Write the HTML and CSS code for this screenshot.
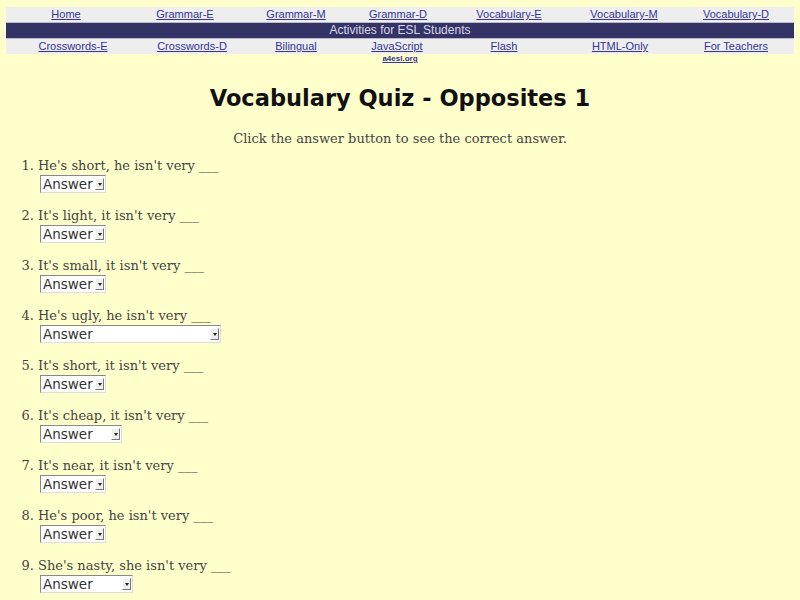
FILE: index.html
```html
<!DOCTYPE html>
<html>
<head>
<meta charset="utf-8">
<title>Vocabulary Quiz - Opposites 1</title>
<link rel="stylesheet" href="styles.css">
</head>
<body>
<table class="nav">
  <colgroup>
    <col class="c120"><col class="c118"><col class="c104"><col class="c100"><col class="c122"><col class="c108"><col class="c116">
  </colgroup>
  <tr class="links">
    <td><a href="#">Home</a></td>
    <td><a href="#">Grammar-E</a></td>
    <td><a href="#">Grammar-M</a></td>
    <td><a href="#">Grammar-D</a></td>
    <td><a href="#">Vocabulary-E</a></td>
    <td><a href="#">Vocabulary-M</a></td>
    <td><a href="#">Vocabulary-D</a></td>
  </tr>
  <tr class="bar">
    <td colspan="7">Activities for ESL Students</td>
  </tr>
</table>
<table class="nav">
  <colgroup>
    <col class="c134"><col class="c104"><col class="c104"><col class="c98"><col class="c116"><col class="c116"><col class="c116">
  </colgroup>
  <tr class="links">
    <td><a href="#">Crosswords-E</a></td>
    <td><a href="#">Crosswords-D</a></td>
    <td><a href="#">Bilingual</a></td>
    <td><a href="#">JavaScript</a></td>
    <td><a href="#">Flash</a></td>
    <td><a href="#">HTML-Only</a></td>
    <td><a href="#">For Teachers</a></td>
  </tr>
</table>
<div class="site"><a href="#">a4esl.org</a></div>

<h1 class="title">Vocabulary Quiz - Opposites 1</h1>
<p class="intro">Click the answer button to see the correct answer.</p>

<ol class="quiz">
  <li><div class="q">He's short, he isn't very ___</div><span class="sel w66"><select><option>Answer</option></select></span></li>
  <li><div class="q">It's light, it isn't very ___</div><span class="sel w66"><select><option>Answer</option></select></span></li>
  <li><div class="q">It's small, it isn't very ___</div><span class="sel w66"><select><option>Answer</option></select></span></li>
  <li><div class="q">He's ugly, he isn't very ___</div><span class="sel w181"><select><option>Answer</option></select></span></li>
  <li><div class="q">It's short, it isn't very ___</div><span class="sel w66"><select><option>Answer</option></select></span></li>
  <li><div class="q">It's cheap, it isn't very ___</div><span class="sel w82"><select><option>Answer</option></select></span></li>
  <li><div class="q">It's near, it isn't very ___</div><span class="sel w66"><select><option>Answer</option></select></span></li>
  <li><div class="q">He's poor, he isn't very ___</div><span class="sel w66"><select><option>Answer</option></select></span></li>
  <li><div class="q">She's nasty, she isn't very ___</div><span class="sel w93"><select><option>Answer</option></select></span></li>
</ol>
</body>
</html>
```
FILE: styles.css
```css
html, body {
  margin: 0;
  background: #ffffcc;
}
body {
  padding: 7px 6px 0 6px;
  font-family: "DejaVu Serif", serif;
  color: #333;
}
.nav {
  width: 100%;
  border-collapse: collapse;
  table-layout: fixed;
  font-family: "Liberation Sans", Arial, sans-serif;
  font-size: 11px;
}
.c98 { width: 98px; }
.c100 { width: 100px; }
.c104 { width: 104px; }
.c108 { width: 108px; }
.c116 { width: 116px; }
.c118 { width: 118px; }
.c120 { width: 120px; }
.c122 { width: 122px; }
.c134 { width: 134px; }
.nav td {
  text-align: center;
  padding: 0;
  white-space: nowrap;
}
.links td {
  background: #eeeeee;
  height: 15px;
  line-height: 15px;
}
.links a {
  color: #333399;
  text-decoration: underline;
}
.bar td {
  background: #333366;
  color: #d8d8e8;
  font-size: 12px;
  height: 15px;
  line-height: 15px;
  border-top: 1px solid #bbbbcc;
  border-bottom: 1px solid #bbbbcc;
}
.site {
  text-align: center;
  font-family: "Liberation Sans", Arial, sans-serif;
  font-size: 8px;
  font-weight: bold;
  line-height: 10px;
}
.site a {
  color: #333399;
}
.title {
  font-family: "DejaVu Sans", sans-serif;
  font-weight: bold;
  font-size: 22.5px;
  color: #111;
  text-align: center;
  margin: 20px 0 0 0;
  line-height: 28px;
}
.intro {
  text-align: center;
  font-size: 13px;
  color: #444;
  margin: 19px 0 0 0;
  line-height: 16px;
}
.quiz {
  margin: 10px 0 0 0;
  padding-left: 32px;
  font-size: 13px;
  color: #444;
}
.quiz li {
  height: 50px;
}
.q {
  line-height: 18px;
}
.sel {
  position: relative;
  display: inline-block;
  height: 18px;
  margin-left: 2px;
}
.sel select {
  appearance: none;
  -webkit-appearance: none;
  width: 100%;
  height: 18px;
  box-sizing: border-box;
  border: 1px solid;
  border-color: #888 #ddd #ddd #888;
  background: #fff;
  font-family: "DejaVu Sans", sans-serif;
  font-size: 13.5px;
  color: #333;
  padding: 0 0 0 2px;
  margin: 0;
  border-radius: 0;
}
.sel::after {
  content: "";
  position: absolute;
  right: 2px;
  top: 3px;
  width: 9px;
  height: 12px;
  background: #eeeeee;
  border: 1px solid;
  border-color: #fff #777 #777 #fff;
  box-sizing: border-box;
}
.sel::before {
  content: "";
  position: absolute;
  right: 4px;
  top: 8px;
  border-left: 2.5px solid transparent;
  border-right: 2.5px solid transparent;
  border-top: 3px solid #222;
  z-index: 1;
}
.w66 { width: 66px; }
.w181 { width: 181px; }
.w82 { width: 82px; }
.w93 { width: 93px; }
```
